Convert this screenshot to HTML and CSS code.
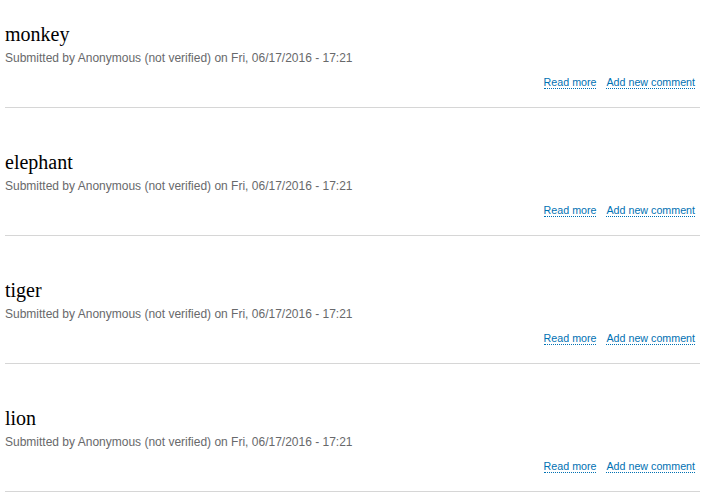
FILE: index.html
```html
<!DOCTYPE html>
<html>
<head>
<meta charset="utf-8">
<link rel="stylesheet" href="styles.css">
</head>
<body>
<div class="list">
  <article class="node">
    <h2 class="title">monkey</h2>
    <div class="meta">Submitted by Anonymous (not verified) on Fri, 06/17/2016 - 17:21</div>
    <ul class="links"><li><a href="#">Read more</a></li><li><a href="#">Add new comment</a></li></ul>
  </article>
  <article class="node">
    <h2 class="title">elephant</h2>
    <div class="meta">Submitted by Anonymous (not verified) on Fri, 06/17/2016 - 17:21</div>
    <ul class="links"><li><a href="#">Read more</a></li><li><a href="#">Add new comment</a></li></ul>
  </article>
  <article class="node">
    <h2 class="title">tiger</h2>
    <div class="meta">Submitted by Anonymous (not verified) on Fri, 06/17/2016 - 17:21</div>
    <ul class="links"><li><a href="#">Read more</a></li><li><a href="#">Add new comment</a></li></ul>
  </article>
  <article class="node">
    <h2 class="title">lion</h2>
    <div class="meta">Submitted by Anonymous (not verified) on Fri, 06/17/2016 - 17:21</div>
    <ul class="links"><li><a href="#">Read more</a></li><li><a href="#">Add new comment</a></li></ul>
  </article>
</div>
</body>
</html>
```
FILE: styles.css
```css
body {
  margin: 0;
  background: #fff;
  font-family: "Liberation Sans", Arial, sans-serif;
}
.list {
  padding: 0 8px 0 5px;
}
.node {
  box-sizing: border-box;
  height: 128px;
  padding-top: 38px;
  border-bottom: 1px solid #d6d6d6;
  display: flex;
  flex-direction: column;
}
.node:first-child {
  height: 108px;
  padding-top: 18px;
}
.title {
  margin: 0;
  font-family: "Liberation Serif", "Times New Roman", serif;
  font-weight: normal;
  font-size: 20px;
  line-height: 32px;
  color: #000;
}
.meta {
  font-size: 12px;
  line-height: 16px;
  color: #68696b;
}
.links {
  list-style: none;
  margin: 6px 0 0;
  padding: 0 5px 0 0;
  display: flex;
  justify-content: flex-end;
  gap: 10px;
}
.links a {
  font-size: 10.7px;
  line-height: 14px;
  color: #0071b3;
  text-decoration: none;
  border-bottom: 1px dotted #0071b3;
}
```
